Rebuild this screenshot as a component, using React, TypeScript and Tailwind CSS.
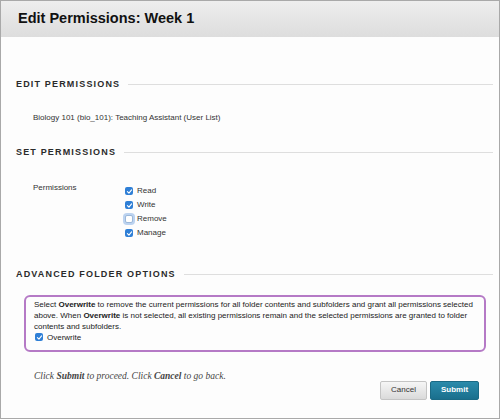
import { ReactNode } from "react";

function SectionTitle({ children }: { children: ReactNode }) {
  return (
    <div className="flex items-center gap-[8px] pl-[15px] pr-[6px]">
      <h2 className="text-[9px] font-bold tracking-[0.13em] text-[#2b2b2b] whitespace-nowrap leading-none">
        {children}
      </h2>
      <div className="flex-1 h-px bg-[#dedede]" />
    </div>
  );
}

function Check({ checked, focus }: { checked: boolean; focus?: boolean }) {
  if (!checked)
    return (
      <span
        className={`inline-block w-[8px] h-[8px] rounded-[2px] bg-white border border-[#9bb7d9] ${
          focus ? "ring-2 ring-[#bcd3f0]" : ""
        }`}
      />
    );
  return (
    <span className="inline-flex items-center justify-center w-[8px] h-[8px] rounded-[2px] bg-[#2f7fd6]">
      <svg viewBox="0 0 10 10" className="w-[7px] h-[7px]">
        <path
          d="M2 5.2 L4.2 7.3 L8 2.8"
          fill="none"
          stroke="white"
          strokeWidth="1.6"
          strokeLinecap="round"
          strokeLinejoin="round"
        />
      </svg>
    </span>
  );
}

const PERMS = [
  { label: "Read", checked: true },
  { label: "Write", checked: true },
  { label: "Remove", checked: false },
  { label: "Manage", checked: true },
];

export default function App() {
  return (
    <div
      className="w-[500px] h-[419px] bg-[#fdfdfd] border border-[#a9a9a9] flex flex-col text-[#222]"
      style={{ fontFamily: '"Liberation Sans", Arial, sans-serif' }}
    >
      <div className="h-[36px] shrink-0 bg-gradient-to-b from-[#eeeeee] to-[#dddddd] flex items-center pl-[17px]">
        <h1 className="text-[14.5px] font-bold text-[#111]">Edit Permissions: Week 1</h1>
      </div>

      <div className="mt-[43px]">
        <SectionTitle>EDIT PERMISSIONS</SectionTitle>
      </div>
      <p className="mt-[25px] pl-[32px] text-[8px] leading-none text-[#333]">
        Biology 101 (bio_101): Teaching Assistant (User List)
      </p>

      <div className="mt-[26px]">
        <SectionTitle>SET PERMISSIONS</SectionTitle>
      </div>

      <div className="mt-[27px] flex pl-[32px]">
        <span className="w-[92px] text-[8px] leading-none text-[#333]">Permissions</span>
        <div className="flex flex-col gap-[5.5px] mt-[3px]">
          {PERMS.map((p) => (
            <label key={p.label} className="flex items-center gap-[4px] text-[8px] leading-[8.5px] text-[#333]">
              <Check checked={p.checked} focus={!p.checked} />
              {p.label}
            </label>
          ))}
        </div>
      </div>

      <div className="mt-[32px]">
        <SectionTitle>ADVANCED FOLDER OPTIONS</SectionTitle>
      </div>

      <div className="mt-[16px] mx-[23px] w-[462px] border-2 border-[#b57ac6] rounded-[6px] px-[8px] pt-[2px] pb-[7px] text-[8px] leading-[11px] text-[#222]">
        <p>
          Select <b>Overwrite</b> to remove the current permissions for all folder contents and
          subfolders and grant all permissions selected above. When <b>Overwrite</b> is not
          selected, all existing permissions remain and the selected permissions are granted to
          folder contents and subfolders.
        </p>
        <label className="flex items-center gap-[4px]">
          <span className="ml-[1px] flex">
            <Check checked />
          </span>
          Overwrite
        </label>
      </div>

      <div className="flex items-start justify-between pl-[33px] pr-[20px] mt-[18px]">
        <p
          className="text-[9.5px] leading-[13px] italic text-[#444]"
          style={{ fontFamily: '"Liberation Serif", Georgia, serif' }}
        >
          Click <b>Submit</b> to proceed. Click <b>Cancel</b> to go back.
        </p>
        <div className="flex gap-[3px] mt-[11px]">
          <button className="w-[47px] h-[19px] rounded-[2px] border border-[#c4c4c4] bg-gradient-to-b from-[#f6f6f6] to-[#dadada] text-[8px] text-[#333]">
            Cancel
          </button>
          <button className="w-[49px] h-[19px] rounded-[2px] border border-[#1a6a85] bg-gradient-to-b from-[#2a8bab] to-[#1a6f8d] text-[8px] font-bold text-white">
            Submit
          </button>
        </div>
      </div>
    </div>
  );
}
